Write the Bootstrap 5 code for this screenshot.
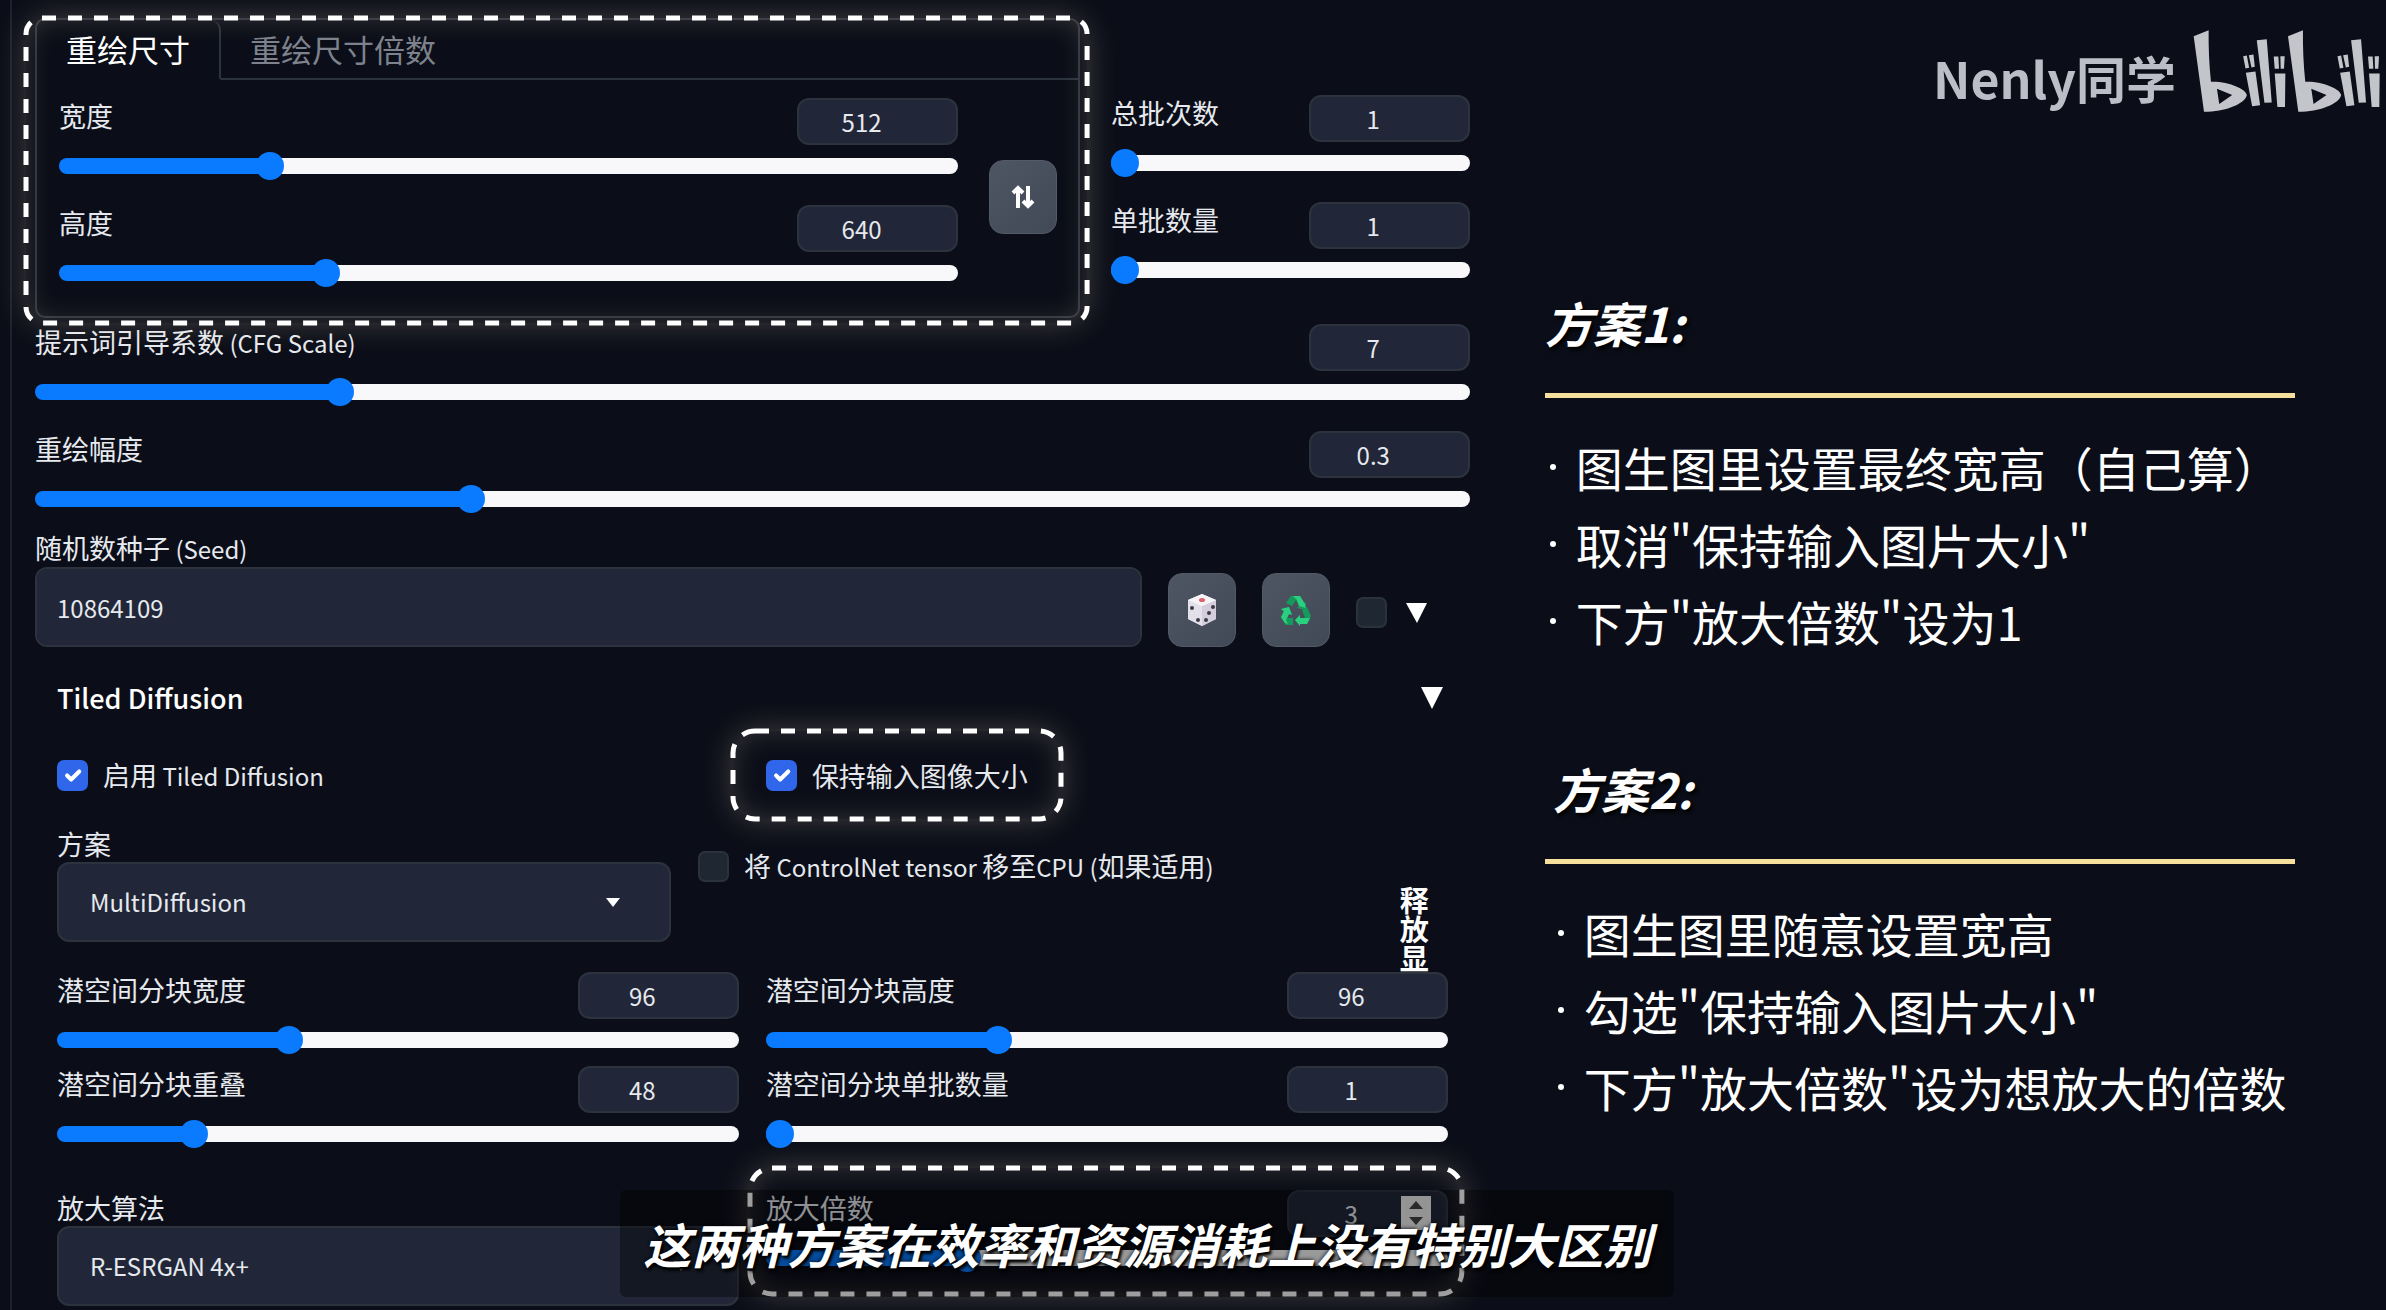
<!DOCTYPE html>
<html lang="zh-CN" data-bs-theme="dark">
<head>
<meta charset="utf-8">
<meta name="viewport" content="width=device-width, initial-scale=1">
<title>Tiled Diffusion</title>
<link href="https://cdn.jsdelivr.net/npm/bootstrap@5.3.0/dist/css/bootstrap.min.css" rel="stylesheet">
<style>
:root{--ink:#e6e9ee;--box:#212738;--line:#2c323e;--blue:#0a7bff}
body{background:#0b0e18;color:var(--ink);font-family:"Noto Sans CJK SC",sans-serif;font-size:27px;line-height:36px}
.stage{min-height:100vh;overflow:hidden}
.settings{flex:0 0 61.6%;padding-left:10px}
.settings-body{border-left:2px solid #1d222e;padding-left:23px;min-height:100vh}
.lat{font-size:24px}
label{margin:0;line-height:36px}

.size-card{flex:1 1 0;min-width:0;margin-top:18px;border:2px solid var(--line);border-radius:10px}
.size-card .nav-tabs{border-bottom:0;flex-wrap:nowrap}
.size-card .nav-link{height:60px;padding:0 29px;border:0;border-radius:0;border-bottom:2px solid var(--line);font-size:31px;line-height:58px;color:#7d828d;margin:0}
.size-card .nav-link.active{color:#fff;background:transparent;border-bottom-color:transparent;border-right:2px solid var(--line);border-top-right-radius:10px}
.size-card .tab-rest{border-bottom:2px solid var(--line)}
.size-body{padding:18px 21px 28px 22px;gap:31px}
.top-row{gap:31px}
.batch{flex:0 0 25%;padding-top:95px}
.fields{display:flex;flex-direction:column;gap:24px}
.field-col{display:flex;flex-direction:column;gap:6px}
.main-fields{margin-top:6px}

.num{width:161px;height:47px;padding:0 32px 0 0;text-align:center;font-size:24px;background:var(--box);border:2px solid var(--line);border-radius:12px;color:var(--ink);appearance:textfield}
.num::-webkit-inner-spin-button{appearance:none;margin:0}
.num-wrap{position:relative}
.spin{position:absolute;right:17px;top:6px;width:30px;height:34px}
.form-range{display:block;height:30px}
.form-range::-webkit-slider-runnable-track{height:16px;border-radius:8px;background:linear-gradient(90deg,var(--blue) calc(14px + (100% - 28px)*var(--fill)),#f8f8fa calc(14px + (100% - 28px)*var(--fill)))}
.form-range::-webkit-slider-thumb{width:28px;height:28px;margin-top:-6px;background:var(--blue);box-shadow:none}

.tool{width:68px;height:74px;flex:none;padding:0;border:1px solid #535a67;border-radius:14px;background:linear-gradient(135deg,#4f5663,#414956);display:flex;align-items:center;justify-content:center}
.wide{height:80px;font-size:24px;background-color:var(--box);border:2px solid var(--line);border-radius:12px;color:var(--ink);padding:0 20px}
select.wide{padding:0 31px;background-image:url("data:image/svg+xml,%3Csvg xmlns='http://www.w3.org/2000/svg' viewBox='0 0 16 10'%3E%3Cpath fill='%23fff' d='M1 1h14L8 10z'/%3E%3C/svg%3E");background-size:16px 10px;background-position:right 48px center}
.seed{margin-top:16px}
.seed-row{gap:26px}
.extra{height:74px;gap:19px;padding:5px 42px 0 0}
.form-check-input.tick{float:none;width:31px;height:31px;margin:0;border:2px solid #2b323e;border-radius:7px;background-color:#1f2733;flex:none}
.form-check-input.tick:checked{background-color:#2f66ea;border-color:#2f66ea}
.tri{width:22px;height:22px;display:block;fill:#fff}

.tiled{padding:0 22px}
.tiled-head{margin-top:31px;width:100%;height:40px;padding:0 5px 0 0;border:0;background:none;color:#fff;font-size:27px;font-weight:500}
.pair{display:grid;grid-template-columns:1fr 1fr;column-gap:27px}
.check-row{margin-top:39px}
.check-item{display:flex;align-items:center;gap:15px;white-space:nowrap}
.method{margin-top:32px;height:146px;gap:27px}
.method-box{flex:0 0 614px}
.method-check{padding-top:22px;align-self:flex-start}
.release{width:31px;height:87px;margin:0 18px 0 auto;padding:0;border:0;background:none;color:#fff;font-size:29px;line-height:29px;font-weight:700;align-self:flex-end;word-break:break-all}
.tiles{row-gap:11px}
.upscale{margin-top:41px}

.ring{position:absolute;pointer-events:none;z-index:2;border-radius:24px;box-shadow:0 0 32px rgba(255,232,205,.24),inset 0 0 28px rgba(255,232,205,.18)}
.ring svg{display:block;width:100%;height:100%;overflow:visible}
.ring rect{fill:none;stroke:#fff;stroke-width:5px;stroke-dasharray:14px 12px}
.ring-size{inset:-2px -9px -7px -11px}
.ring-keep{left:-33px;top:-26px;width:328px;height:88px}
.ring-scale{inset:-22px -14px 12px -16px}

.notes{flex:1 1 0;min-width:0}
.mark-row{padding-top:27px;height:284px;gap:14px;color:#bbbec6}
.author{font-size:50px;line-height:88px;font-weight:700;padding-top:6px;height:88px}
.brand{width:196px;height:88px;fill:#c4c5ca}
.plan{margin:0 91px 91px 75px}
.plan h2{margin:0;font-size:48px;line-height:76px;font-weight:700;font-style:italic;color:#fff;text-shadow:2px 3px 4px #000}
.plan hr{height:5px;margin:33px 0 30px;border:0;opacity:1;background:#f7df9d}
.plan ul{list-style:none;margin:0;padding:0;font-size:47px;line-height:77px;font-weight:400;color:#fff;white-space:nowrap}
.plan li{display:flex}
.plan li::before{content:"";width:6px;height:6px;border-radius:50%;background:#fff;margin:36px 20px 0 5px;flex:none}
.plan.indent h2,.plan.indent ul{padding-left:8px}

.caption-bar{position:absolute;z-index:5;left:26%;bottom:13px;width:1054px;height:107px;line-height:107px;background:rgba(0,0,0,.38);border-radius:6px;text-align:center;color:#fff;font-size:48px;font-weight:700;font-style:italic;white-space:nowrap;text-shadow:2px 3px 3px #000,0 0 4px #000}
</style>
</head>
<body>
<div class="stage position-relative d-flex">
  <main class="settings">
    <div class="settings-body">
      <div class="top-row d-flex">
        <section class="size-card position-relative">
          <div class="nav nav-tabs d-flex" role="tablist">
            <button class="nav-link active" type="button" role="tab">重绘尺寸</button>
            <button class="nav-link" type="button" role="tab">重绘尺寸倍数</button>
            <span class="tab-rest flex-grow-1"></span>
          </div>
          <div class="size-body d-flex align-items-center">
            <div class="fields flex-grow-1">
              <div class="field-col">
                <div class="d-flex justify-content-between"><label for="w">宽度</label><input class="num" type="number" value="512" aria-label="宽度"></div>
                <input class="form-range" id="w" type="range" min="64" max="2048" value="512" style="--fill:.2258">
              </div>
              <div class="field-col">
                <div class="d-flex justify-content-between"><label for="h">高度</label><input class="num" type="number" value="640" aria-label="高度"></div>
                <input class="form-range" id="h" type="range" min="64" max="2048" value="640" style="--fill:.2903">
              </div>
            </div>
            <button class="tool mt-2" type="button" aria-label="交换宽高">
              <svg width="24" height="24" viewBox="0 0 24 24" fill="none" stroke="#fff" stroke-width="4"><path d="M7 23V3M2 8l5-5 5 5M17 1v20M12 16l5 5 5-5"/></svg>
            </button>
          </div>
          <div class="ring ring-size"><svg><rect width="100%" height="100%" rx="16"/></svg></div>
        </section>
        <section class="batch fields">
          <div class="field-col">
            <div class="d-flex justify-content-between"><label for="bc">总批次数</label><input class="num" type="number" value="1" aria-label="总批次数"></div>
            <input class="form-range" id="bc" type="range" min="1" max="100" value="1" style="--fill:0">
          </div>
          <div class="field-col">
            <div class="d-flex justify-content-between"><label for="bs">单批数量</label><input class="num" type="number" value="1" aria-label="单批数量"></div>
            <input class="form-range" id="bs" type="range" min="1" max="8" value="1" style="--fill:0">
          </div>
        </section>
      </div>

      <div class="main-fields fields">
        <div class="field-col">
          <div class="d-flex justify-content-between"><label for="cfg">提示词引导系数<span class="lat"> (CFG Scale)</span></label><input class="num" type="number" value="7" aria-label="CFG Scale"></div>
          <input class="form-range" id="cfg" type="range" min="1" max="30" value="7" style="--fill:.2069">
        </div>
        <div class="field-col">
          <div class="d-flex justify-content-between"><label for="dn">重绘幅度</label><input class="num" type="number" value="0.3" step="0.01" aria-label="重绘幅度"></div>
          <input class="form-range" id="dn" type="range" min="0" max="1" step="0.01" value="0.3" style="--fill:.3">
        </div>
      </div>

      <div class="seed">
        <label class="d-block" for="seed">随机数种子<span class="lat"> (Seed)</span></label>
        <div class="seed-row d-flex align-items-end">
          <input class="form-control wide flex-grow-1 w-auto" id="seed" type="text" value="10864109">
          <button class="tool" type="button" aria-label="随机种子">
            <svg width="32" height="34" viewBox="0 0 32 34"><path d="M16 1l14 6v19l-14 7L2 26V7z" fill="#e9e5ef"/><path d="M2 7l14 6v20L2 26z" fill="#e4e0ea"/><path d="M30 7l-14 6v20l14-7z" fill="#d3cddc"/><path d="M16 1l14 6-14 6L2 7z" fill="#f7f4f8"/><ellipse cx="16" cy="7" rx="3" ry="2" fill="#d9606c"/><g fill="#3c3a48"><ellipse cx="6" cy="15" rx="2" ry="2"/><ellipse cx="12" cy="27" rx="2" ry="2"/><ellipse cx="27" cy="14" rx="2" ry="2"/><ellipse cx="23" cy="20" rx="2" ry="2"/><ellipse cx="20" cy="27" rx="2" ry="2"/></g></svg>
          </button>
          <button class="tool" type="button" aria-label="重用种子">
            <svg width="32" height="32" viewBox="0 0 32 32"><path d="M11 2h9l4 7 2-1-1 8-8-2 2-2-3-6-4 6-6-3z" fill="#149a5a"/><path d="M13 2h7l5 8 1 4-7-2-2-6z" fill="#2ad07f"/><path d="M1 15l8-2 3 8-3-1-2 4h6v7H6l-5-7 3-6z" fill="#149a5a"/><path d="M1 15l8-2 3 8-3-1-3 6 2 4-3-1-4-6 3-6z" fill="#2ad07f"/><path d="M22 16l5-3 4 9-4 8h-7v2l-5-6 5-5v3h5z" fill="#149a5a"/><path d="M15 26l5-5v3h10l-3 6h-7v2z" fill="#2ad07f"/></svg>
          </button>
          <div class="extra d-flex align-items-center">
            <input class="form-check-input tick" type="checkbox" aria-label="更多种子选项">
            <svg class="tri" viewBox="0 0 22 22"><path d="M0 1h21L11 21z"/></svg>
          </div>
        </div>
      </div>

      <section class="tiled">
        <button class="tiled-head d-flex align-items-center justify-content-between" type="button">Tiled Diffusion <svg class="tri" viewBox="0 0 22 22"><path d="M0 0h22L11 22z"/></svg></button>
        <div class="pair check-row">
          <div class="check-item"><input class="form-check-input tick" type="checkbox" id="en" checked><label for="en">启用<span class="lat"> Tiled Diffusion</span></label></div>
          <div class="check-item position-relative"><input class="form-check-input tick" type="checkbox" id="keep" checked><label for="keep">保持输入图像大小</label>
            <div class="ring ring-keep"><svg><rect width="100%" height="100%" rx="22"/></svg></div>
          </div>
        </div>
        <div class="method d-flex">
          <div class="method-box"><label class="d-block" for="mt">方案</label><select class="form-select wide" id="mt"><option>MultiDiffusion</option></select></div>
          <div class="check-item method-check"><input class="form-check-input tick" type="checkbox" id="cn"><label for="cn">将<span class="lat"> ControlNet tensor </span>移至<span class="lat">CPU (</span>如果适用<span class="lat">)</span></label></div>
          <button class="release" type="button">释放显</button>
        </div>
        <div class="pair tiles">
          <div class="field-col">
            <div class="d-flex justify-content-between"><label for="tw">潜空间分块宽度</label><input class="num" type="number" value="96" aria-label="潜空间分块宽度"></div>
            <input class="form-range" id="tw" type="range" min="16" max="256" value="96" style="--fill:.3333">
          </div>
          <div class="field-col">
            <div class="d-flex justify-content-between"><label for="th">潜空间分块高度</label><input class="num" type="number" value="96" aria-label="潜空间分块高度"></div>
            <input class="form-range" id="th" type="range" min="16" max="256" value="96" style="--fill:.3333">
          </div>
          <div class="field-col">
            <div class="d-flex justify-content-between"><label for="ov">潜空间分块重叠</label><input class="num" type="number" value="48" aria-label="潜空间分块重叠"></div>
            <input class="form-range" id="ov" type="range" min="0" max="256" value="48" style="--fill:.1875">
          </div>
          <div class="field-col">
            <div class="d-flex justify-content-between"><label for="tb">潜空间分块单批数量</label><input class="num" type="number" value="1" aria-label="潜空间分块单批数量"></div>
            <input class="form-range" id="tb" type="range" min="1" max="8" value="1" style="--fill:0">
          </div>
        </div>
        <div class="pair upscale">
          <div><label class="d-block" for="up">放大算法</label><select class="form-select wide" id="up"><option>R-ESRGAN 4x+</option></select></div>
          <div class="field-col position-relative">
            <div class="d-flex justify-content-between"><label for="sf">放大倍数</label>
              <div class="num-wrap"><input class="num" type="number" value="3" aria-label="放大倍数"><svg class="spin" viewBox="0 0 30 34"><path fill="#efefef" d="M0 0h30v34H0z"/><path fill="#444" d="M8 13h14L15 5zM8 21h14l-7 8z"/></svg></div>
            </div>
            <input class="form-range" id="sf" type="range" min="1" max="8" value="3" style="--fill:.2857">
            <div class="ring ring-scale"><svg><rect width="100%" height="100%" rx="22"/></svg></div>
          </div>
        </div>
      </section>
    </div>
  </main>

  <aside class="notes">
    <div class="mark-row d-flex justify-content-end">
      <span class="author">Nenly同学</span>
      <svg class="brand" viewBox="870 80 588 265" role="img" aria-label="bilibili"><defs><g id="bili"><path fill-rule="evenodd" d="M880 108L925 90Q924 170 932 245C985 243 1040 268 1040 286C1032 312 975 335 911 335ZM950 266L996 285L957 312Z"/><path d="M1029 168l11-2 7 37-11 2zM1046 165l14-2 4 37-10 2zM1037 218l29-4 14 102-24 3zM1070 120l30-3 15 190-22 1zM1121 169h14l2 37h-13zM1141 168h13l-2 38h-10zM1124 220h32l-1 101h-23z"/></g></defs><use href="#bili"/><use href="#bili" x="284"/></svg>
    </div>
    <section class="plan">
      <h2>方案1:</h2>
      <hr>
      <ul><li>图生图里设置最终宽高（自己算）</li><li>取消"保持输入图片大小"</li><li>下方"放大倍数"设为1</li></ul>
    </section>
    <section class="plan indent mb-0">
      <h2>方案2:</h2>
      <hr>
      <ul><li>图生图里随意设置宽高</li><li>勾选"保持输入图片大小"</li><li>下方"放大倍数"设为想放大的倍数</li></ul>
    </section>
  </aside>

  <div class="caption-bar">这两种方案在效率和资源消耗上没有特别大区别</div>
</div>
<script src="https://cdn.jsdelivr.net/npm/bootstrap@5.3.0/dist/js/bootstrap.bundle.min.js"></script>
</body>
</html>
